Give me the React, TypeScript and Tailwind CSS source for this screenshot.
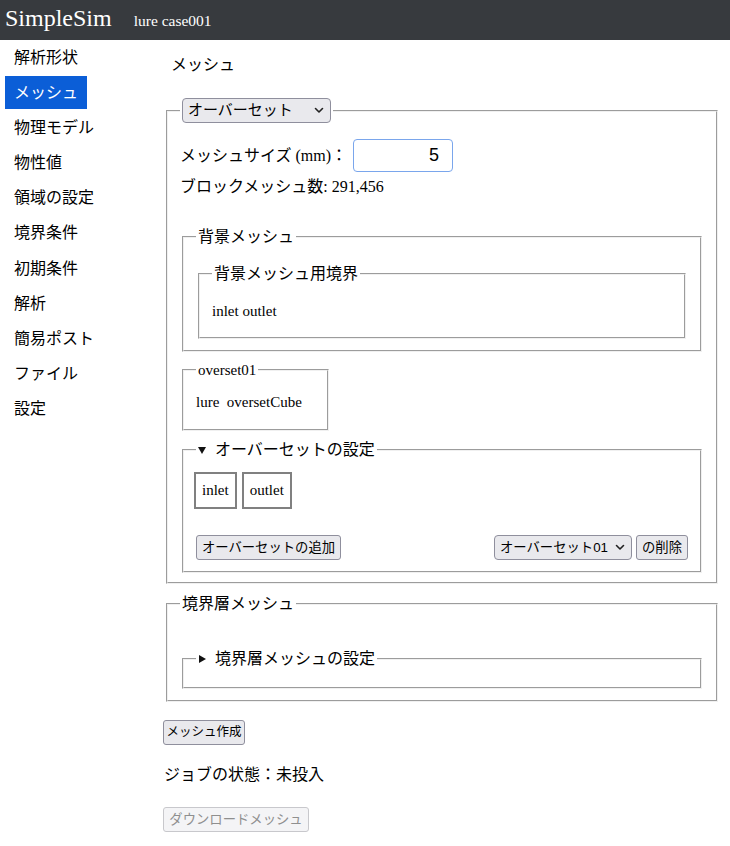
import React from "react";

const fsCls =
  "border-2 [border-style:groove] border-[#f0f0f0] mx-[2px] px-[12px] min-w-0";
const legCls = "px-[2px] leading-[24px]";
const btnBase =
  "h-[25px] bg-[#e9e9ed] border border-[#8f8f9d] rounded-[3px] leading-[23px] text-black font-['Liberation_Sans','Noto_Sans_CJK_JP',sans-serif] whitespace-nowrap";

function Chevron() {
  return (
    <svg width="10" height="7" viewBox="0 0 10 7" className="shrink-0">
      <path d="M1.5 1.5 L5 5 L8.5 1.5" fill="none" stroke="#222" strokeWidth="1.6" strokeLinecap="round" strokeLinejoin="round" />
    </svg>
  );
}

function Select({ label, width, size }: { label: string; width: string; size: string }) {
  return (
    <div
      className={`${width} ${size} h-[25px] flex items-center justify-between pl-[5px] pr-[6px] bg-[#e9e9ed] border border-[#8f8f9d] rounded-[4px] text-black font-['Liberation_Sans','Noto_Sans_CJK_JP',sans-serif] whitespace-nowrap`}
    >
      <span>{label}</span>
      <Chevron />
    </div>
  );
}

const navItems = [
  "解析形状",
  "メッシュ",
  "物理モデル",
  "物性値",
  "領域の設定",
  "境界条件",
  "初期条件",
  "解析",
  "簡易ポスト",
  "ファイル",
  "設定",
];

export default function App() {
  return (
    <div className="w-[730px] min-h-[846px] bg-white text-black text-[16px] font-['Liberation_Serif','Noto_Sans_CJK_JP',serif]">
      <header className="h-[40px] bg-[#373a3e] flex items-baseline px-[5px] text-white">
        <span className="text-[24px] leading-[37px]">SimpleSim</span>
        <span className="ml-[22px] text-[15.5px]">lure case001</span>
      </header>
      <div className="flex">
        <nav className="w-[164px] shrink-0 pt-[1px] pl-[5px] flex flex-col items-start gap-[2.2px]">
          {navItems.map((n) => (
            <div
              key={n}
              className={
                n === "メッシュ"
                  ? "h-[33px] px-[9px] flex items-center bg-[#0b5ed7] text-white leading-[20px]"
                  : "h-[33px] px-[9px] flex items-center leading-[20px]"
              }
            >
              {n}
            </div>
          ))}
        </nav>
        <main className="flex-1 pr-[10px]">
          <div className="mt-[13px] ml-[7px] leading-[24px]">メッシュ</div>

          <fieldset className={`${fsCls} mt-[21px] pb-[9px]`}>
            <legend className="px-[2px]">
              <Select label="オーバーセット" width="w-[149px]" size="text-[15px]" />
            </legend>
            <div className="mt-[16px] flex items-center">
              <span className="leading-[20px]">メッシュサイズ (mm)：</span>
              <div className="ml-[6px] w-[100px] h-[33px] border border-[#7aa6ec] rounded-[4px] flex items-center justify-end pr-[13px] text-[18px] font-['Liberation_Sans',sans-serif]">
                5
              </div>
            </div>
            <div className="mt-[5px] leading-[20px]">ブロックメッシュ数: 291,456</div>

            <fieldset className={`${fsCls} mt-[28px] pb-[11px]`}>
              <legend className={legCls}>背景メッシュ</legend>
              <fieldset className={`${fsCls} mt-[13px] pb-[16px]`}>
                <legend className={legCls}>背景メッシュ用境界</legend>
                <div className="mt-[15px] leading-[20px] text-[15px]">inlet outlet</div>
              </fieldset>
            </fieldset>

            <fieldset className={`${fsCls} mt-[6px] pb-[17px] w-[147px]`}>
              <legend className={`${legCls} text-[15px]`}>overset01</legend>
              <div className="mt-[10px] leading-[20px] text-[15px]">lure&nbsp; oversetCube</div>
            </fieldset>

            <fieldset className={`${fsCls} mt-[7px] pb-[11px]`}>
              <legend className={`${legCls} flex items-center`}>
                <svg width="10" height="10" viewBox="0 0 10 10" className="mr-[8px] -ml-[1px]">
                  <path d="M1 2 L9 2 L5 9 Z" fill="#111" />
                </svg>
                オーバーセットの設定
              </legend>
              <div className="mt-[10px] -ml-[2px] flex gap-[5px]">
                <div className="h-[37px] px-[6px] border-2 border-[#808080] flex items-center text-[15px]">inlet</div>
                <div className="h-[37px] px-[6px] border-2 border-[#808080] flex items-center text-[15px]">outlet</div>
              </div>
              <div className="mt-[26px] flex items-center">
                <button className={`${btnBase} w-[145px] px-[4px] text-[13.33px]`}>オーバーセットの追加</button>
                <div className="flex-1" />
                <Select label="オーバーセット01" width="w-[138px]" size="text-[13.33px]" />
                <button className={`${btnBase} ml-[4px] w-[52px] px-[2px] text-[13.33px]`}>の削除</button>
              </div>
            </fieldset>
          </fieldset>

          <fieldset className={`${fsCls} mt-[8px] pb-[11px]`}>
            <legend className={legCls}>境界層メッシュ</legend>
            <fieldset className={`${fsCls} mt-[31px] pb-[16px]`}>
              <legend className={`${legCls} flex items-center`}>
                <svg width="10" height="10" viewBox="0 0 10 10" className="mr-[8px] -ml-[1px]">
                  <path d="M2 1 L9 5 L2 9 Z" fill="#111" />
                </svg>
                境界層メッシュの設定
              </legend>
            </fieldset>
          </fieldset>

          <button className={`${btnBase} mt-[18px] w-[82px] block -ml-[1px] px-0 text-[12.5px]`}>メッシュ作成</button>
          <div className="mt-[20px] leading-[20px]">ジョブの状態：未投入</div>
          <button
            disabled
            className="mt-[22px] -ml-[1px] block h-[25px] w-[146px] px-[2px] bg-[#f4f4f6] border border-[#c8c8cc] rounded-[3px] text-[13.33px] leading-[23px] text-[#8f8f8f] font-['Liberation_Sans','Noto_Sans_CJK_JP',sans-serif] whitespace-nowrap"
          >
            ダウンロードメッシュ
          </button>
        </main>
      </div>
    </div>
  );
}
